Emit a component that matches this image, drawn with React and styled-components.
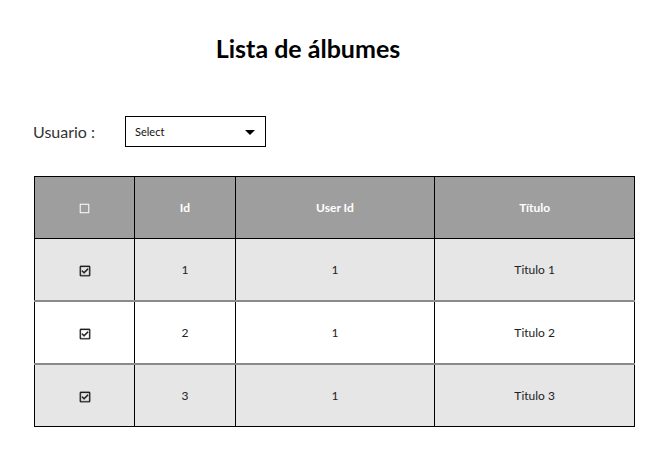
import React from 'react'
import styled, { createGlobalStyle } from 'styled-components'
import { FaRegSquare, FaRegCheckSquare } from 'react-icons/fa'

const GlobalStyle = createGlobalStyle`
  body {
    margin: 0;
    background: #fff;
    font-family: Lato, "Open Sans", sans-serif;
    color: #222;
  }
`

const Page = styled.div`
  width: 600px;
  padding: 34px 0 0 34px;
`

const Title = styled.h1`
  margin: 0;
  padding-right: 52px;
  text-align: center;
  font-size: 25px;
  font-weight: 700;
  color: #000;
  line-height: 28px;
`

const FilterRow = styled.div`
  display: flex;
  align-items: center;
  margin: 54px 0 0 -1px;
`

const Label = styled.label`
  width: 92px;
  font-size: 16px;
  color: #333;
`

const SelectBox = styled.div`
  box-sizing: border-box;
  width: 141px;
  height: 31px;
  border: 1px solid #000;
  display: flex;
  align-items: center;
  justify-content: space-between;
  padding: 0 10px 0 9px;
  font-size: 11px;
  color: #111;
`

const Caret = styled.span`
  width: 0;
  height: 0;
  margin-top: 2px;
  border-left: 5px solid transparent;
  border-right: 5px solid transparent;
  border-top: 5px solid #000;
`

const Table = styled.table`
  margin-top: 29px;
  width: 601px;
  border-collapse: collapse;
  border: 1px solid #000;
  font-size: 12px;
  text-align: center;

  tbody tr + tr td {
    border-top: 2px solid #8a8a8a;
  }
`

const Th = styled.th`
  width: ${p => p.$w}px;
  height: 61px;
  padding: 0;
  background: #9e9e9e;
  color: #fff;
  font-weight: 700;
  border-left: 1px solid #000;
  border-bottom: 1px solid #000;
  svg {
    font-size: 11px;
    vertical-align: middle;
  }
`

const Row = styled.tr`
  background: ${p => (p.$alt ? '#e6e6e6' : '#fff')};
`

const Td = styled.td`
  height: 61px;
  padding: 0;
  color: #222;
  border-left: 1px solid #000;
  svg {
    font-size: 12px;
    vertical-align: middle;
    stroke: currentColor;
    stroke-width: 12px;
  }
`

const rows = [
  { id: 1, userId: 1, title: 'Titulo 1' },
  { id: 2, userId: 1, title: 'Titulo 2' },
  { id: 3, userId: 1, title: 'Titulo 3' },
]

export default function App() {
  return (
    <Page>
      <GlobalStyle />
      <Title>Lista de álbumes</Title>
      <FilterRow>
        <Label>Usuario :</Label>
        <SelectBox>
          Select
          <Caret />
        </SelectBox>
      </FilterRow>
      <Table>
        <thead>
          <tr>
            <Th $w={100}><FaRegSquare /></Th>
            <Th $w={100}>Id</Th>
            <Th $w={200}>User Id</Th>
            <Th $w={200}>Título</Th>
          </tr>
        </thead>
        <tbody>
          {rows.map((r, i) => (
            <Row key={r.id} $alt={i % 2 === 0}>
              <Td><FaRegCheckSquare /></Td>
              <Td>{r.id}</Td>
              <Td>{r.userId}</Td>
              <Td>{r.title}</Td>
            </Row>
          ))}
        </tbody>
      </Table>
    </Page>
  )
}
